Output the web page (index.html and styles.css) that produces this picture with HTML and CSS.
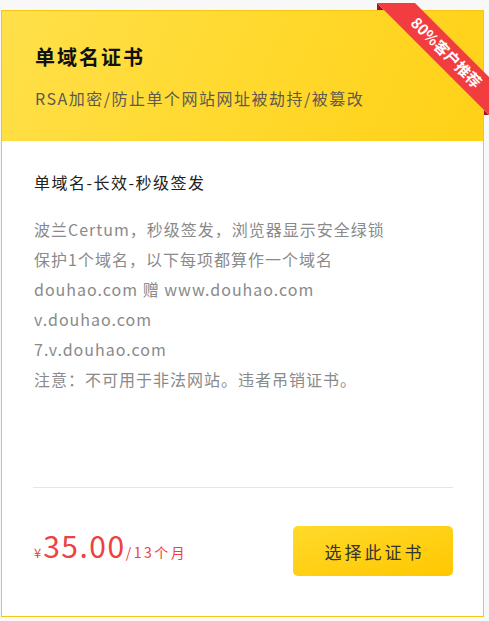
FILE: index.html
```html
<!DOCTYPE html>
<html lang="zh-CN">
<head>
<meta charset="utf-8">
<title>单域名证书</title>
<link rel="stylesheet" href="styles.css">
</head>
<body>
<div class="page">
  <div class="card">
    <div class="ribbon">
      <svg class="ribbon-svg" width="112" height="112" viewBox="0 0 112 112">
        <polygon class="ribbon-fold" points="0,0 0,7 7,7"/>
        <polygon class="ribbon-fold" points="107,107 107,112 112,112"/>
        <polygon class="ribbon-band" points="0,0 38,0 112,74 112,112"/>
        <text class="ribbon-text" x="70" y="49" transform="rotate(45 70 49)" text-anchor="middle" dominant-baseline="central">80%客户推荐</text>
      </svg>
    </div>
    <div class="card-head">
      <h2 class="title">单域名证书</h2>
      <p class="subtitle">RSA加密/防止单个网站网址被劫持/被篡改</p>
    </div>
    <div class="card-body">
      <h3 class="body-title">单域名-长效-秒级签发</h3>
      <ul class="features">
        <li>波兰Certum，秒级签发，浏览器显示安全绿锁</li>
        <li>保护1个域名，以下每项都算作一个域名</li>
        <li>douhao.com 赠 www.douhao.com</li>
        <li>v.douhao.com</li>
        <li>7.v.douhao.com</li>
        <li>注意：不可用于非法网站。违者吊销证书。</li>
      </ul>
      <div class="divider"></div>
      <div class="price-row">
        <div class="price"><span class="yen">¥</span><span class="amount">35.00</span><span class="unit">/13个月</span></div>
        <button class="buy-btn" type="button">选择此证书</button>
      </div>
    </div>
  </div>
</div>
</body>
</html>
```

FILE: styles.css
```css
html, body {
  margin: 0;
  padding: 0;
  background: #f8f8f8;
}

body {
  font-family: "Noto Sans CJK SC", "Noto Sans", sans-serif;
  overflow: hidden;
}

.page {
  padding: 10px 5px 6px 1px;
}

.card {
  position: relative;
  box-sizing: border-box;
  width: 483px;
  border: 1px solid #f5c712;
  background: #ffffff;
}

.ribbon {
  position: absolute;
  top: -8px;
  right: -6px;
  width: 112px;
  height: 112px;
  z-index: 2;
}

.ribbon-svg {
  display: block;
}

.ribbon-band {
  fill: #f23d40;
}

.ribbon-fold {
  fill: #a3141b;
}

.ribbon-text {
  fill: #ffffff;
  font-family: "Noto Sans CJK SC", "Noto Sans", sans-serif;
  font-size: 15px;
  font-weight: 700;
}

.card-head {
  padding: 32px 30px 31px 33px;
  background: linear-gradient(115deg, #ffe04b 0%, #ffd92e 50%, #ffd117 100%);
}

.title {
  margin: 0;
  font-size: 20px;
  line-height: 28px;
  font-weight: 700;
  letter-spacing: 2px;
  color: #111111;
}

.subtitle {
  margin: 15px 0 0;
  font-size: 16px;
  line-height: 24px;
  letter-spacing: 1.5px;
  color: #5d5a50;
}

.card-body {
  padding: 29px 30px 39px 31px;
}

.body-title {
  margin: 0 0 0 1px;
  font-size: 16px;
  line-height: 24px;
  font-weight: 400;
  letter-spacing: 1.5px;
  color: #222222;
}

.features {
  list-style: none;
  margin: 20px 0 0 1px;
  padding: 0;
  font-size: 16px;
  line-height: 30px;
  letter-spacing: 1px;
  color: #8a8a8a;
}

.divider {
  margin-top: 93px;
  height: 1px;
  background: #e5e5e5;
}

.price-row {
  margin-top: 37px;
  display: flex;
  justify-content: space-between;
  align-items: center;
}

.price {
  color: #f0403f;
  line-height: 40px;
  padding-bottom: 6px;
  padding-left: 1px;
}

.yen {
  font-size: 13px;
  line-height: 1;
  letter-spacing: 0;
  margin-right: 2px;
}

.amount {
  font-size: 30px;
  letter-spacing: 1.5px;
}

.unit {
  font-size: 14px;
  line-height: 1;
  letter-spacing: 2.5px;
}

.buy-btn {
  width: 160px;
  height: 50px;
  border: none;
  border-radius: 5px;
  padding: 0 0 0 3px;
  background: linear-gradient(165deg, #ffda2b 0%, #ffc700 100%);
  font-family: "Noto Sans CJK SC", "Noto Sans", sans-serif;
  font-size: 17px;
  letter-spacing: 3px;
  color: #333333;
  cursor: pointer;
}
```
